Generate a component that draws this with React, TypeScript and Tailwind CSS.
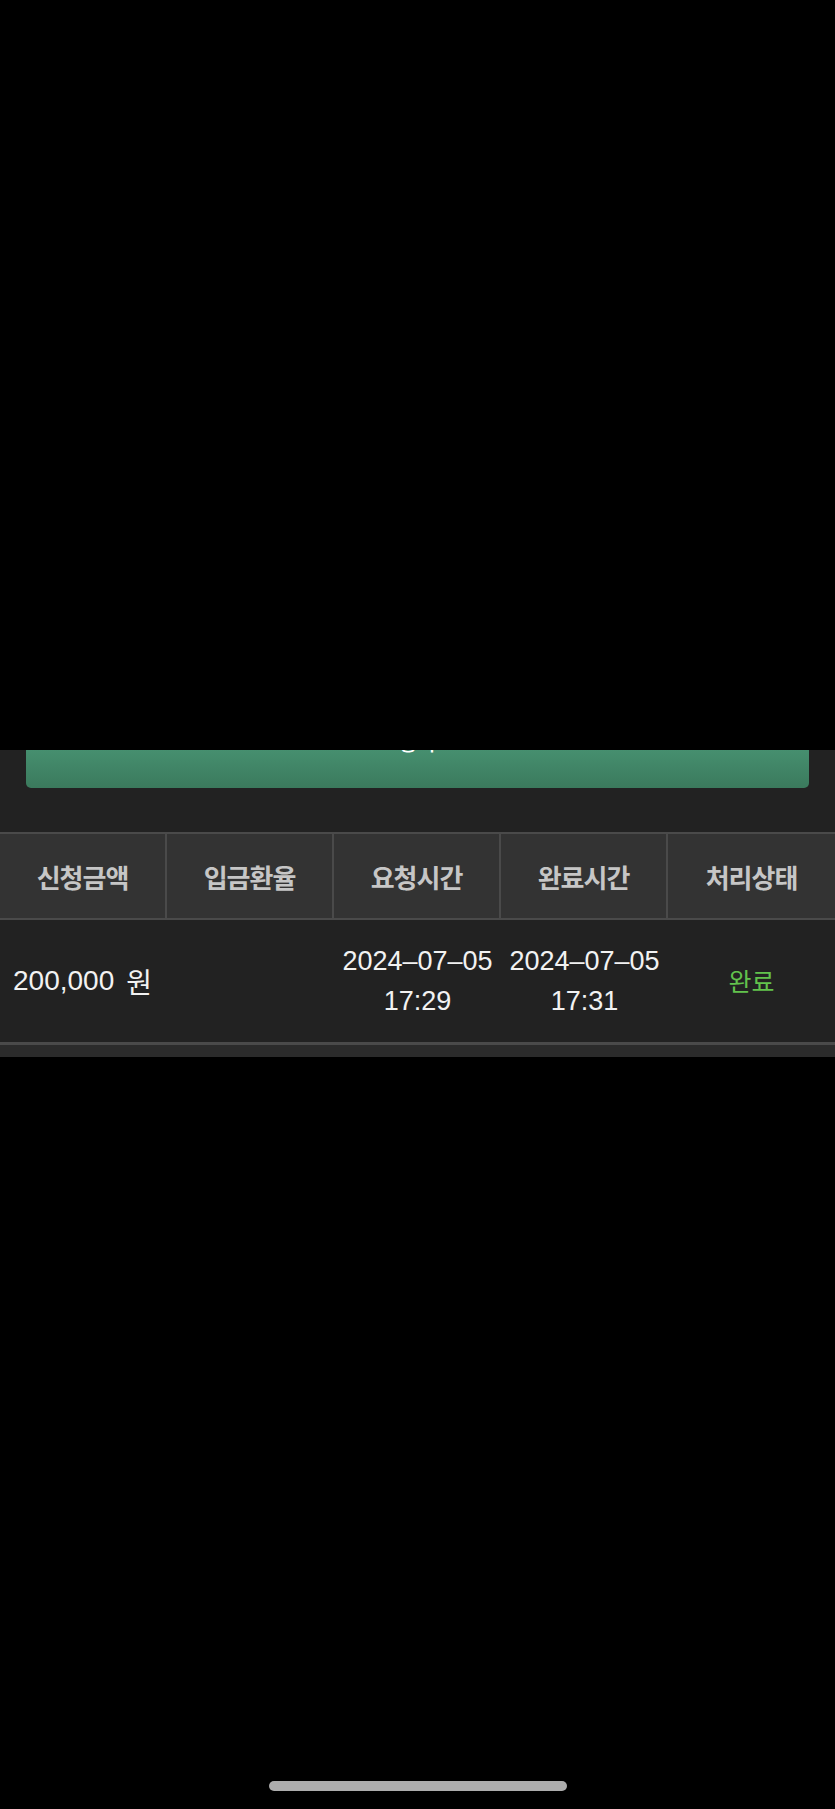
const HEADERS = ["신청금액", "입금환율", "요청시간", "완료시간", "처리상태"];

const KR = "font-['Noto_Sans_CJK_KR',sans-serif]";
const NUM = "font-['Liberation_Sans','Noto_Sans_CJK_KR',sans-serif]";

function DateCell({ date, time }: { date: string; time: string }) {
  return (
    <div className={`flex flex-col items-center justify-center text-[27px] leading-[40px] text-[#f2f2f2] ${NUM}`}>
      <span>{date}</span>
      <span>{time}</span>
    </div>
  );
}

export default function App() {
  return (
    <div className="flex min-h-[1809px] w-[835px] flex-col bg-black">
      <div className="h-[750px]" />

      <section className="bg-[#222222]">
        <div className="mx-[26px] flex h-[38px] flex-col items-center overflow-hidden rounded-b-[5px] bg-gradient-to-b from-[#468f6f] to-[#3b7a5d]">
          <span className={`-mt-[17px] text-[20px] leading-[20px] font-medium text-white ${KR}`}>등록</span>
        </div>

        <div className="mt-[44px]">
          <div className="grid grid-cols-5 divide-x-2 divide-[#4a4a4a] border-y-2 border-[#4a4a4a] bg-[#333333]">
            {HEADERS.map((h) => (
              <div
                key={h}
                className={`flex h-[84px] items-center justify-center text-[26px] font-semibold tracking-[-1px] text-[#c6c6c6] ${KR}`}
              >
                {h}
              </div>
            ))}
          </div>

          <div className="grid h-[122px] grid-cols-5 bg-[#222222]">
            <div className={`flex items-center whitespace-pre pl-[13px] text-[28px] text-[#f2f2f2] ${NUM}`}>
              <span>200,000</span>
              <span className={`ml-[12px] ${KR}`}>원</span>
            </div>
            <div />
            <DateCell date="2024–07–05" time="17:29" />
            <DateCell date="2024–07–05" time="17:31" />
            <div className={`flex items-center justify-center text-[25px] text-[#62c24d] ${KR}`}>완료</div>
          </div>

          <div className="h-[3px] bg-[#4a4a4a]" />
          <div className="h-[12px] bg-[#2b2b2b]" />
        </div>
      </section>

      <div className="flex flex-1 items-end justify-center pb-[18px]">
        <div className="h-[10px] w-[298px] rounded-full bg-[#adadad]" />
      </div>
    </div>
  );
}
